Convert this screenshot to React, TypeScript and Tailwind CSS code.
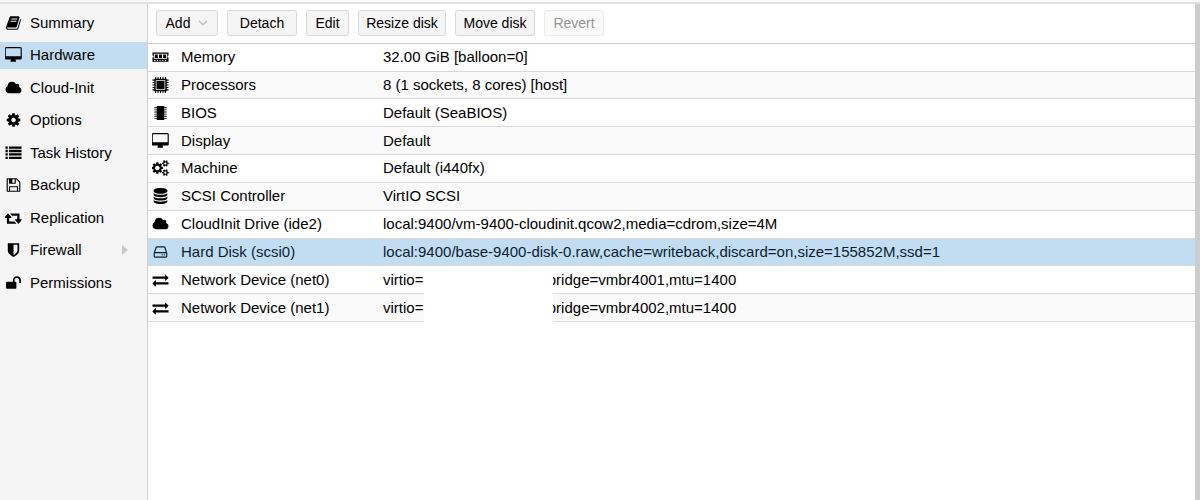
import type { ReactNode } from 'react'
import { clsx } from 'clsx'

type IconName = keyof typeof glyphs

const smallGear =
  'q0 16-149 31-12 27-30 52 51 113 51 138 0 4-4 7-122 71-124 71-8 0-46-47t-52-68q-20 2-30 2t-30-2q-14 21-52 68t-46 47q-2 0-124-71-4-3-4-7 0-25 51-138-18-25-30-52-149-15-149-31v-140q0-16 149-31 13-29 30-52-51-113-51-138 0-4 4-7 4-2 35-20t59-34 30-16q8 0 46 46.5t52 67.5q20-2 30-2t30 2q51-71 92-112l6-2q4 0 124 70 4 3 4 7 0 25-51 138 17 23 30 52 149 15 149 31z'

// width of the glyph's box and its outline, all on a 1792 high grid
const glyphs = {
  book: [1792, 'M1703 478q40 57 18 129l-275 906q-19 64-76.5 107.5t-122.5 43.5h-923q-77 0-148.5-53.5t-99.5-131.5q-24-67-2-127 0-4 3-27t4-37q1-8-3-21.5t-3-19.5q2-11 8-21t16.5-23.5 16.5-23.5q23-38 45-91.5t30-91.5q3-10 .5-30t-.5-28q3-11 17-28t17-23q21-36 42-92t25-90q1-9-2.5-32t.5-28q4-13 22-30.5t22-22.5q19-26 42.5-84.5t27.5-96.5q1-8-3-25.5t-2-26.5q2-8 9-18t18-23 17-21q8-12 16.5-30.5t15-35 16-36 19.5-32 26.5-23.5 36-11.5 47.5 5.5l-1 3q38-9 51-9h761q74 0 114 56t18 130l-274 906q-36 119-71.5 153.5t-128.5 34.5h-869q-27 0-38 15-11 16-1 43 24 70 144 70h923q29 0 56-15.5t35-41.5l300-987q7-22 5-57 38 15 59 43zm-1064 2q-4 13 2 22.5t20 9.5h608q13 0 25.5-9.5t16.5-22.5l21-64q4-13-2-22.5t-20-9.5h-608q-13 0-25.5 9.5t-16.5 22.5zm-83 256q-4 13 2 22.5t20 9.5h608q13 0 25.5-9.5t16.5-22.5l21-64q4-13-2-22.5t-20-9.5h-608q-13 0-25.5 9.5t-16.5 22.5z'],
  desktop: [1856, 'M1728 992v-832q0-13-9.5-22.5t-22.5-9.5h-1600q-13 0-22.5 9.5t-9.5 22.5v832q0 13 9.5 22.5t22.5 9.5h1600q13 0 22.5-9.5t9.5-22.5zm128-832v1088q0 66-47 113t-113 47h-544q0 37 16 77.5t32 71 16 43.5q0 26-19 45t-45 19h-512q-26 0-45-19t-19-45q0-14 16-44t32-70 16-78h-544q-66 0-113-47t-47-113v-1088q0-66 47-113t113-47h1600q66 0 113 47t47 113z'],
  cloud: [2048, 'M1984 1152q0 159-112.5 271.5t-271.5 112.5h-1088q-185 0-316.5-131.5t-131.5-316.5q0-132 71-241.5t187-163.5q-2-28-2-43 0-212 150-362t362-150q158 0 286.5 88t187.5 230q70-62 166-62 106 0 181 75t75 181q0 75-41 138 129 30 213 134.5t84 239.5z'],
  cog: [1792, 'M1152 896q0-106-75-181t-181-75-181 75-75 181 75 181 181 75 181-75 75-181zm512-109v222q0 12-8 23t-20 13l-185 28q-19 54-39 91 35 50 107 138 10 12 10 25t-9 23q-27 37-99 108t-94 71q-12 0-26-9l-138-108q-44 23-91 38-16 136-29 186-7 28-36 28h-222q-14 0-24.5-8.5t-11.5-21.5l-28-184q-49-16-90-37l-141 107q-10 9-25 9-14 0-25-11-126-114-165-168-7-10-7-23 0-12 8-23 15-21 51-66.5t54-70.5q-27-50-41-99l-183-27q-13-2-21-12.5t-8-23.5v-222q0-12 8-23t19-13l186-28q14-46 39-92-40-57-107-138-10-12-10-24 0-10 9-23 26-36 98.5-107.5t94.5-71.5q13 0 26 10l138 107q44-23 91-38 16-136 29-186 7-28 36-28h222q14 0 24.5 8.5t11.5 21.5l28 184q49 16 90 37l142-107q9-9 24-9 13 0 25 10 129 119 165 170 7 8 7 22 0 12-8 23-15 21-51 66.5t-54 70.5q26 50 41 98l183 28q13 2 21 12.5t8 23.5z'],
  list: [1792, 'M0 160h256v256h-256zM384 160h1408v256h-1408zM0 544h256v256h-256zM384 544h1408v256h-1408zM0 928h256v256h-256zM384 928h1408v256h-1408zM0 1312h256v256h-256zM384 1312h1408v256h-1408z'],
  floppy: [1792, 'M512 1536h768v-384h-768v384zm896 0h128v-896q0-14-10-38.5t-20-34.5l-281-281q-10-10-34-20t-39-10v416q0 40-28 68t-68 28h-576q-40 0-68-28t-28-68v-416h-128v1280h128v-416q0-40 28-68t68-28h832q40 0 68 28t28 68v416zm-384-928v-320q0-13-9.5-22.5t-22.5-9.5h-192q-13 0-22.5 9.5t-9.5 22.5v320q0 13 9.5 22.5t22.5 9.5h192q13 0 22.5-9.5t9.5-22.5zm640 32v928q0 40-28 68t-68 28h-1344q-40 0-68-28t-28-68v-1344q0-40 28-68t68-28h928q40 0 88 20t76 48l280 280q28 28 48 76t20 88z'],
  retweet: [1856, 'M1216 1504q0 13-9.5 22.5t-22.5 9.5h-960q-8 0-13.5-2t-9-7-5.5-8-3-11.5-1-11.5v-600h-192q-26 0-45-19t-19-45q0-24 15-41l320-384q19-22 49-22t49 22l320 384q15 17 15 41 0 26-19 45t-45 19h-192v384h576q16 0 25 11l160 192q7 10 7 21zm640-416q0 24-15 41l-320 384q-20 23-49 23t-49-23l-320-384q-15-17-15-41 0-26 19-45t45-19h192v-384h-576q-16 0-25-12l-160-192q-7-9-7-20 0-13 9.5-22.5t22.5-9.5h960q8 0 13.5 2t9 7 5.5 8 3 11.5 1 11.5v600h192q26 0 45 19t19 45z'],
  shield: [1792, 'M1344 960v-640h-448v1137q119-63 213-137 235-184 235-360zm192-768v768q0 86-33.5 170.5t-83 150-118 127.5-126.5 103-121 77.5-89.5 49.5-42.5 20q-12 6-26 6t-26-6q-16-7-42.5-20t-89.5-49.5-121-77.5-126.5-103-118-127.5-83-150-33.5-170.5v-768q0-26 19-45t45-19h1152q26 0 45 19t19 45z'],
  unlock: [1792, 'M1728 576v256q0 26-19 45t-45 19h-64q-26 0-45-19t-19-45v-256q0-106-75-181t-181-75-181 75-75 181v192h96q40 0 68 28t28 68v576q0 40-28 68t-68 28h-960q-40 0-68-28t-28-68v-576q0-40 28-68t68-28h672v-192q0-185 131.5-316.5t316.5-131.5 316.5 131.5 131.5 316.5z'],
  memory: [1792, 'M0 400h1792v320a110 110 0 0 0 0 220v500h-1792v-500a110 110 0 0 0 0-220zM150 540v540h1492v-540zM260 610h340v400h-340zM726 610h340v400h-340zM1192 610h340v400h-340zM190 1230v100h120v-100zM490 1230v100h120v-100zM790 1230v100h120v-100zM1090 1230v100h120v-100zM1390 1230v100h120v-100z'],
  cpu: [1792, 'M200 200h1392v1392h-1392zM360 360v1072h1072v-1072zM450 450h892v892h-892zM290 0h120v200h-120zM563 0h120v200h-120zM836 0h120v200h-120zM1109 0h120v200h-120zM1382 0h120v200h-120zM290 1592h120v200h-120zM563 1592h120v200h-120zM836 1592h120v200h-120zM1109 1592h120v200h-120zM1382 1592h120v200h-120zM0 290h200v120h-200zM0 563h200v120h-200zM0 836h200v120h-200zM0 1109h200v120h-200zM0 1382h200v120h-200zM1592 290h200v120h-200zM1592 563h200v120h-200zM1592 836h200v120h-200zM1592 1109h200v120h-200zM1592 1382h200v120h-200z'],
  chip: [1792, 'M480 100h832v1592h-832zM200 220h280v80h-280zM200 430h280v80h-280zM200 640h280v80h-280zM200 850h280v80h-280zM200 1060h280v80h-280zM200 1270h280v80h-280zM200 1480h280v80h-280zM1312 220h280v80h-280zM1312 430h280v80h-280zM1312 640h280v80h-280zM1312 850h280v80h-280zM1312 1060h280v80h-280zM1312 1270h280v80h-280zM1312 1480h280v80h-280z'],
  cogs: [1856, 'M832 896q0-106-75-181t-181-75-181 75-75 181 75 181 181 75 181-75 75-181zm768 512q0-52-38-90t-90-38-90 38-38 90q0 53 37.5 90.5t90.5 37.5 90.5-37.5 37.5-90.5zm0-1024q0-52-38-90t-90-38-90 38-38 90q0 53 37.5 90.5t90.5 37.5 90.5-37.5 37.5-90.5zm-384 421v185q0 10-7 19.5t-16 10.5l-155 24q-11 35-32 76 34 48 90 115 7 11 7 20 0 12-7 19-23 30-82.5 89.5t-78.5 59.5q-11 0-21-7l-115-90q-37 19-77 31-11 108-23 155-7 24-30 24h-186q-11 0-20-7.5t-10-17.5l-23-153q-34-10-75-31l-118 89q-7 7-20 7-11 0-21-8-144-133-144-160 0-9 7-19 10-14 41-53t47-61q-23-44-35-82l-152-24q-10-1-17-9.5t-7-19.5v-185q0-10 7-19.5t16-10.5l155-24q11-35 32-76-34-48-90-115-7-11-7-20 0-12 7-20 22-30 82-89t79-59q11 0 21 7l115 90q34-18 77-32 11-108 23-154 7-24 30-24h186q11 0 20 7.5t10 17.5l23 153q34 10 75 31l118-89q8-7 20-7 11 0 21 8 144 133 144 160 0 8-7 19-12 16-42 54t-45 60q23 48 34 82l152 23q10 2 17 10.5t7 19.5zM1856 1338v140' + smallGear + 'M1856 314v140' + smallGear],
  database: [1792, 'M896 768q237 0 443-43t325-127v170q0 69-103 128t-280 93.5-385 34.5-385-34.5-280-93.5-103-128v-170q119 84 325 127t443 43zm0 768q237 0 443-43t325-127v170q0 69-103 128t-280 93.5-385 34.5-385-34.5-280-93.5-103-128v-170q119 84 325 127t443 43zm0-384q237 0 443-43t325-127v170q0 69-103 128t-280 93.5-385 34.5-385-34.5-280-93.5-103-128v-170q119 84 325 127t443 43zm0-1152q208 0 385 34.5t280 93.5 103 128v128q0 69-103 128t-280 93.5-385 34.5-385-34.5-280-93.5-103-128v-128q0-69 103-128t280-93.5 385-34.5z'],
  hdd: [1792, 'M1168 1216q0 33-23.5 56.5t-56.5 23.5-56.5-23.5-23.5-56.5 23.5-56.5 56.5-23.5 56.5 23.5 23.5 56.5zm256 0q0 33-23.5 56.5t-56.5 23.5-56.5-23.5-23.5-56.5 23.5-56.5 56.5-23.5 56.5 23.5 23.5 56.5zm112 160v-320q0-13-9.5-22.5t-22.5-9.5h-1216q-13 0-22.5 9.5t-9.5 22.5v320q0 13 9.5 22.5t22.5 9.5h1216q13 0 22.5-9.5t9.5-22.5zm-1230-480h1180l-157-482q-4-13-16-21.5t-26-8.5h-782q-14 0-26 8.5t-16 21.5zm1358 160v320q0 66-47 113t-113 47h-1216q-66 0-113-47t-47-113v-320q0-25 16-75l197-606q17-53 63-86t101-33h782q55 0 101 33t63 86l197 606q16 50 16 75z'],
  exchange: [1792, 'M1792 1184v192q0 13-9.5 22.5t-22.5 9.5h-1376v192q0 13-9.5 22.5t-22.5 9.5q-12 0-24-10l-319-320q-9-9-9-22 0-14 9-23l320-320q9-9 23-9 13 0 22.5 9.5t9.5 22.5v192h1376q13 0 22.5 9.5t9.5 22.5zm0-544q0 14-9 23l-320 320q-9 9-23 9-13 0-22.5-9.5t-9.5-22.5v-192h-1376q-13 0-22.5-9.5t-9.5-22.5v-192q0-13 9.5-22.5t22.5-9.5h1376v-192q0-14 9-23t23-9q12 0 24 10l319 319q9 9 9 23z'],
} as const

function Icon({ name }: { name: IconName }) {
  const [width, d] = glyphs[name]
  return (
    <svg viewBox={`0 0 ${width} 1792`} className="block h-4 w-[17px] shrink-0" fill="currentColor" fillRule="evenodd" aria-hidden="true">
      <path d={d} />
    </svg>
  )
}

const navItems: { icon: IconName; label: string; expandable?: boolean }[] = [
  { icon: 'book', label: 'Summary' },
  { icon: 'desktop', label: 'Hardware' },
  { icon: 'cloud', label: 'Cloud-Init' },
  { icon: 'cog', label: 'Options' },
  { icon: 'list', label: 'Task History' },
  { icon: 'floppy', label: 'Backup' },
  { icon: 'retweet', label: 'Replication' },
  { icon: 'shield', label: 'Firewall', expandable: true },
  { icon: 'unlock', label: 'Permissions' },
]

function Hidden() {
  return <span className="inline-block w-[116px]" />
}

const hardware: { icon: IconName; name: string; value: ReactNode }[] = [
  { icon: 'memory', name: 'Memory', value: '32.00 GiB [balloon=0]' },
  { icon: 'cpu', name: 'Processors', value: '8 (1 sockets, 8 cores) [host]' },
  { icon: 'chip', name: 'BIOS', value: 'Default (SeaBIOS)' },
  { icon: 'desktop', name: 'Display', value: 'Default' },
  { icon: 'cogs', name: 'Machine', value: 'Default (i440fx)' },
  { icon: 'database', name: 'SCSI Controller', value: 'VirtIO SCSI' },
  { icon: 'cloud', name: 'CloudInit Drive (ide2)', value: 'local:9400/vm-9400-cloudinit.qcow2,media=cdrom,size=4M' },
  { icon: 'hdd', name: 'Hard Disk (scsi0)', value: 'local:9400/base-9400-disk-0.raw,cache=writeback,discard=on,size=155852M,ssd=1' },
  { icon: 'exchange', name: 'Network Device (net0)', value: <>virtio=6<Hidden />bridge=vmbr4001,mtu=1400</> },
  { icon: 'exchange', name: 'Network Device (net1)', value: <>virtio=3<Hidden />bridge=vmbr4002,mtu=1400</> },
]

function ToolButton({ children, className, disabled }: { children: ReactNode; className?: string; disabled?: boolean }) {
  return (
    <button
      type="button"
      disabled={disabled}
      className={clsx(
        'flex h-[26px] items-center justify-center rounded-[3px] border text-sm',
        disabled ? 'border-[#ececec] bg-[#fafafa] text-[#959595]' : 'border-[#d8d8d8] bg-[#f5f5f5] text-black',
        className,
      )}
    >
      {children}
    </button>
  )
}

function Sidebar({ selected }: { selected: string }) {
  return (
    <nav className="w-[148px] shrink-0 border-r border-[#cfcfcf] bg-[#f5f5f5] pt-[5px]">
      <ul className="flex h-[287px] flex-col justify-between">
        {navItems.map((item) => (
          <li key={item.label}>
            <a
              href="#"
              aria-current={item.label === selected ? 'page' : undefined}
              className={clsx('flex h-[27px] items-center gap-2 pr-[18px] pl-[5px]', item.label === selected && 'bg-[#c2ddf2]')}
            >
              <Icon name={item.icon} />
              <span className="grow">{item.label}</span>
              {item.expandable && (
                <svg viewBox="0 0 8 10" className="h-[10px] w-2" fill="#c8c8c8" aria-hidden="true">
                  <path d="M1 0l6 5-6 5z" />
                </svg>
              )}
            </a>
          </li>
        ))}
      </ul>
    </nav>
  )
}

function HardwareTable({ selected }: { selected: string }) {
  return (
    <div className="relative">
      <table className="h-[278px] w-full table-fixed border-collapse text-left">
        <colgroup>
          <col className="w-[33px]" />
          <col className="w-[202px]" />
          <col />
        </colgroup>
        <tbody>
          {hardware.map((row) => (
            <tr
              key={row.name}
              className={clsx('border-b border-[#d9d9d9]', row.name === selected ? 'bg-[#c2ddf2] text-[#0b1e30]' : 'even:bg-[#fafafa]')}
            >
              <td className="p-0 pl-[4px]"><Icon name={row.icon} /></td>
              <th scope="row" className="p-0 font-normal whitespace-nowrap">{row.name}</th>
              <td className="p-0 whitespace-nowrap">{row.value}</td>
            </tr>
          ))}
        </tbody>
      </table>
      {/* keeps the MAC addresses out of sight */}
      <div className="absolute -bottom-1 left-[276px] h-14 w-[129px] bg-white" />
    </div>
  )
}

export default function App() {
  return (
    <div className="flex min-h-screen flex-col bg-[#f8f8f8] pt-[2px] font-['Liberation_Sans',Arial,sans-serif] text-[15px] leading-5 text-black">
      <div className="flex grow border-t-2 border-[#e2e2e2]">
        <Sidebar selected="Hardware" />
        <main className="min-w-0 grow border-r-[5px] border-[#cdcdcd] bg-white">
          <div className="flex items-center border-b border-[#d0d0d0] pt-[6px] pb-[7px] pl-2">
            <div className="flex gap-[9px]">
              <ToolButton className="w-[62px] gap-2">
                Add
                <svg viewBox="0 0 10 6" className="h-[6px] w-[10px]" fill="none" stroke="#bdbdbd" strokeWidth="1.4" aria-hidden="true">
                  <path d="M1 .7l4 4 4-4" />
                </svg>
              </ToolButton>
              <ToolButton className="w-[70px]">Detach</ToolButton>
              <ToolButton className="w-[43px]">Edit</ToolButton>
              <ToolButton className="w-[88px]">Resize disk</ToolButton>
              <ToolButton className="w-[80px]">Move disk</ToolButton>
              <ToolButton className="w-[60px]" disabled>Revert</ToolButton>
            </div>
          </div>
          <HardwareTable selected="Hard Disk (scsi0)" />
        </main>
      </div>
    </div>
  )
}
